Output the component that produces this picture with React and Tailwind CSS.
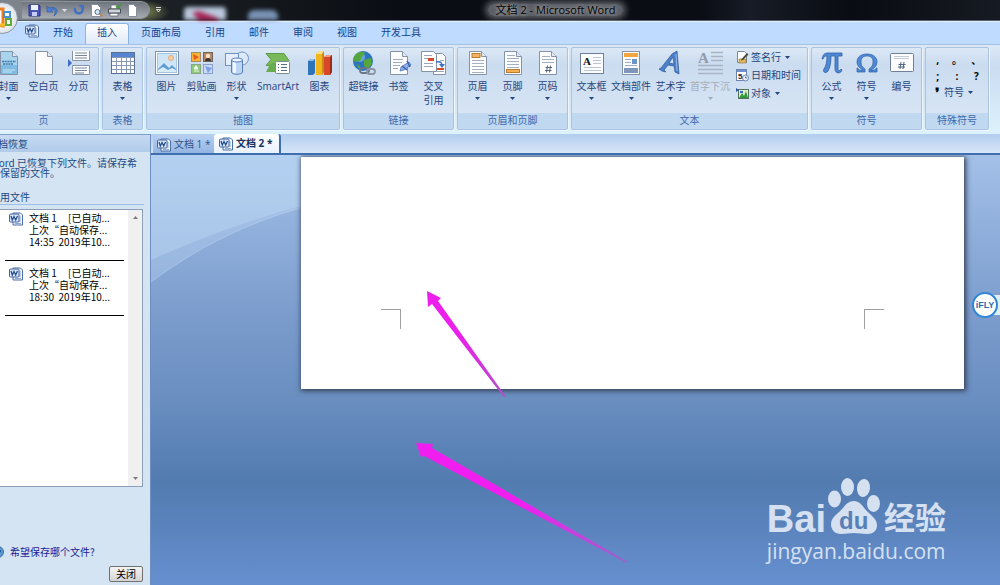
import React from 'react';
import clsx from 'clsx';

/* ---------- icons ---------- */

const Caret = ({ className }) => (
    <svg viewBox="0 0 5 3" className={clsx('w-[5px] h-[3px] shrink-0', className)}>
        <path d="M0 0h5L2.500 3z" fill="currentColor" />
    </svg>
);

const WordIcon = ({ className }) => (
    <svg viewBox="0 0 14 14" className={clsx('w-3.5 h-3.5 shrink-0', className)}>
        <path d="M4 1h7.500l2 2v10H4z" fill="#f4f8fe" stroke="#4a6ea8" />
        <path d="M6 11.500h6M11 4v6" stroke="#8fa9d0" />
        <rect x=".5" y="2" width="9.500" height="8" rx="1" fill="#dbe7f8" stroke="#44659f" />
        <path d="M2 4l1.300 4 1.700-3.500L6.700 8 8.500 4" fill="none" stroke="#24508f" strokeWidth="1.300" />
    </svg>
);

const Sheet = ({ children, fill = '#fdfdfe' }) => (
    <>
        <path d="M3.500.5h12l5 5v18h-17z" fill={fill} stroke="#8593a8" />
        <path d="M15.500.5v5h5" fill="#e3e9f2" stroke="#8593a8" />
        {children}
    </>
);

const icons = {
    cover: (
        <Sheet fill="#a9d4ee">
            <path d="M4 14h16v9H4z" fill="#7fbbe2" />
            <path d="M5 10.500h14M6 13h10" stroke="#3a75a8" strokeWidth="1.500" strokeDasharray="2 .7" />
            <path d="M6 19h12M6 21h9" stroke="#c9e5f5" />
        </Sheet>
    ),
    blank: <Sheet />,
    pageBreak: (
        <>
            <path d="M5.500 0v9.500h17V0M5.500 23.500v-9h17v9z" fill="#fff" stroke="#8593a8" />
            <path d="M8 2h12M8 4.500h12M8 7h12M8 17h12M8 19.500h12M8 22h9" stroke="#77859b" />
            <path d="M1 8l4 4-4 4z" fill="#3d6cc0" />
        </>
    ),
    table: (
        <>
            <rect x=".5" y="1.500" width="23" height="21" fill="#fff" stroke="#5b6f93" />
            <path d="M1 2h22v4H1z" fill="#5584d0" />
            <path d="M1 6.500h22M1 10.500h22M1 14.500h22M1 18.500h22M5.500 6v16M10.500 6v16M15.500 6v16M19.500 6v16" stroke="#8a99b3" />
        </>
    ),
    picture: (
        <>
            <rect x=".5" y=".5" width="23" height="23" fill="#fff" stroke="#7d93b5" />
            <rect x="2.500" y="2.500" width="19" height="19" fill="#cfe6f8" stroke="#a8c3df" />
            <circle cx="16" cy="7" r="2.500" fill="#fbd0a4" stroke="#e8a876" />
            <path d="M3 18l6-6 5 5 3-3 4 4v3H3z" fill="#5f9dce" />
            <path d="M3 19l5-3 5 3 4-2 4 2v2H3z" fill="#d8ecf8" />
        </>
    ),
    clip: (
        <>
            <rect x="1.500" y="1.500" width="9" height="9" fill="#f9b52c" stroke="#a18b6b" />
            <rect x="13.500" y="1.500" width="9" height="9" fill="#b98664" stroke="#6d635c" />
            <rect x="1.500" y="13.500" width="9" height="9" fill="#8cc979" stroke="#8aa586" />
            <rect x="13.500" y="13.500" width="9" height="9" fill="#c8dafa" stroke="#8b9fc8" />
            <path d="M3 3l6 3-5 3z" fill="#e4572c" />
            <circle cx="18" cy="5" r="2.200" fill="#fbe2c4" />
            <path d="M15 10c0-4 6-4 6 0z" fill="#3b3430" />
            <path d="M6 14.500l2 3.500H4zM4 20h5" fill="#fff" stroke="#e9f7e4" />
            <path d="M15 15l7 2-4 5z" fill="#7ba0e6" />
        </>
    ),
    shapes: (
        <>
            <circle cx="17" cy="7.500" r="6.500" fill="#dbe9fa" stroke="#6d92c5" />
            <rect x=".5" y="2.500" width="13" height="12" fill="#e5effb" stroke="#6d92c5" />
            <path d="M6.500 9v12c0 3 11 3 11 0V9z" fill="#bdd5f3" stroke="#587fb8" />
            <path d="M8 10v12h3V10z" fill="#f1f7fe" />
            <ellipse cx="12" cy="9" rx="5.500" ry="2" fill="#edf4fd" stroke="#587fb8" />
        </>
    ),
    smartArt: (
        <>
            <path d="M0 2.500h18l5 7-5 5H0l5-6z" fill="#79b958" stroke="#5b9a49" />
            <path d="M3 15l3-3h5v9H0z" fill="#69ab50" />
            <rect x="9.500" y="10.500" width="14" height="12" rx="1" fill="#fdfefe" stroke="#7a9189" />
            <path d="M12 13.500h1M15 13.500h6M12 16.500h1M15 16.500h6M12 19.500h1M15 19.500h6" stroke="#5a7080" />
        </>
    ),
    chart: (
        <>
            <path d="M0 10l3-2h4v14l-2 2H0z" fill="#2f73bb" />
            <path d="M0 10l3-2h4l-2 2z" fill="#8fc1ec" />
            <path d="M8 3l3-3h5v21l-2 3H8z" fill="#f1b51d" />
            <path d="M8 3l3-3h5l-2 3z" fill="#fbe48c" />
            <path d="M14 3l2-3v21l-2 3z" fill="#ca8a10" />
            <path d="M16 6l3-2h5v17l-2 3h-6z" fill="#d9472b" />
            <path d="M16 6l3-2h5l-2 2z" fill="#f59a80" />
            <path d="M22 6l2-2v17l-2 3z" fill="#9e2a18" />
        </>
    ),
    hyperlink: (
        <>
            <circle cx="11" cy="10" r="10" fill="#2c74c0" />
            <circle cx="8" cy="6" r="5" fill="#8cc6f0" opacity=".6" />
            <path d="M3 4c4-4 8-4 10-2l-3 4-2 4-5 1-2-3zM12 9l7-2 1 6-4 5-4-3zM4 13l4 2v4z" fill="#55a63c" />
            <rect x="8" y="17" width="9" height="5" rx="2.500" fill="none" stroke="#6c7685" strokeWidth="1.800" />
            <rect x="15" y="18" width="8" height="5" rx="2.500" fill="none" stroke="#8b95a5" strokeWidth="1.800" />
        </>
    ),
    bookmark: (
        <Sheet>
            <path d="M6 8.500h10M6 11.500h9M6 14.500h7M6 17.500h5" stroke="#a0acbf" />
            <path d="M22 11l2 3-7 5-4 1 1-4z" fill="#8fb0e8" stroke="#3f67b0" strokeWidth=".7" />
            <path d="M15 15l5 4M20 10l3 6" stroke="#3a62ad" strokeWidth="1.500" />
        </Sheet>
    ),
    crossRef: (
        <>
            <path d="M11.500 2.500h9l3 3v18h-12z" fill="#fff" stroke="#8593a8" />
            <path d="M-.5.500h12l3 3v17h-15z" fill="#fff" stroke="#8593a8" />
            <path d="M2 4.500h8M2 7.500h4M2 12.500h9M2 15.500h9M14 20.500h8M18 9.500h4" stroke="#9aa7bb" />
            <path d="M6 7h6v3H6zM15 17h7v2h-7z" fill="#d9482c" />
            <path d="M14 11c5-1 6 1 6 4" fill="none" stroke="#3c72c4" strokeWidth="1.500" />
            <path d="M17 13h6l-3 4z" fill="#3c72c4" />
        </>
    ),
    header: (
        <Sheet>
            <rect x="6" y="2.500" width="8" height="4" fill="#f2b565" stroke="#bd7b2a" />
            <path d="M6 9.500h12M6 12.500h12M6 15.500h12M6 18.500h12M6 21.500h12" stroke="#a3afc2" />
        </Sheet>
    ),
    footer: (
        <Sheet>
            <path d="M6 4.500h8M6 7.500h12M6 10.500h12M6 13.500h12M6 16.500h12" stroke="#a3afc2" />
            <rect x="5.500" y="18.500" width="13" height="3" fill="#f4b055" stroke="#bd7b2a" />
        </Sheet>
    ),
    pageNumber: (
        <Sheet>
            <path d="M6 5.500h8M6 8.500h12M6 11.500h12" stroke="#a3afc2" />
            <path d="M11.500 14.500l-1 7M14.500 14.500l-1 7M9.500 16.500h6.500M9 19.500h6.500" stroke="#53647f" />
        </Sheet>
    ),
    textBox: (
        <>
            <rect x=".5" y="2.500" width="23" height="20" fill="#fbfcfe" stroke="#6f7f98" />
            <text x="3" y="14" fontSize="11" fontWeight="bold" fontFamily="Liberation Serif, serif" fill="#111">A</text>
            <path d="M13 6.500h8M13 9.500h8M13 12.500h8M4 16.500h17M4 19.500h17" stroke="#bcc5d3" />
        </>
    ),
    quickParts: (
        <>
            <rect x="3.500" y=".5" width="17" height="23" fill="#fbfcfe" stroke="#8593a8" />
            <path d="M5 2h14v4H5z" fill="#f2a640" />
            <path d="M6 8.500h6M6 11.500h6M6 14.500h12" stroke="#9fabbf" />
            <path d="M13 8h5v5h-5z" fill="#6c94c9" />
            <path d="M5 17h14v5H5z" fill="#7d96ba" />
        </>
    ),
    wordArt: (
        <>
            <path d="M18 0l2 23-4-2-1-6-6-1-4 5 2 2-4-1-3-2 2-1L13 3zM14 6l-4 6 5 1z" fill="#4a80cd" stroke="#2c5695" strokeWidth=".7" fillRule="evenodd" />
            <path d="M17 3l1 17" stroke="#97bcf0" />
        </>
    ),
    dropCap: (
        <>
            <text x="0" y="12" fontSize="15" fontWeight="bold" fontFamily="Liberation Serif, serif" fill="#8f9bad">A</text>
            <path d="M13 1.500h12M13 5.500h12M13 9.500h12M0 14.500h25M0 18.500h25M0 22.500h25" stroke="#a9b3c3" strokeWidth="1.500" />
        </>
    ),
    equation: (
        <path d="M2 8C3 4 4 2 8 2h14v3h-4v13c0 2 2 2 3 0l1 1c-1 4-7 4-7-1V5h-4c0 7-1 11-3 15-2 3-6 1-4-2 2-3 3-7 3-13-3 0-3 1-4 3z" fill="#4f88d4" stroke="#2d5fa6" strokeWidth=".8" />
    ),
    symbol: (
        <path d="M2 21v-4h1c0 2 1 2 5 2-4-2-6-5-6-8 0-5 4-8 10-8s10 3 10 8c0 3-2 6-6 8 4 0 5 0 5-2h1v4h-8v-3c3-2 4-4 4-7 0-4-2-6-6-6s-6 2-6 6c0 3 1 5 4 7v3z" fill="#4f88d4" stroke="#2d5fa6" strokeWidth=".7" />
    ),
    number: (
        <>
            <rect x=".5" y="2.500" width="23" height="18" rx="1" fill="#fdfdfe" stroke="#6f7f98" />
            <path d="M4 5.500h15M4 7.500h15" stroke="#c3cbd8" />
            <path d="M11 11l-1 7M14 11l-1 7M8.500 13.500h7M8 16h7" stroke="#53647f" />
        </>
    ),
};

const smallIcons = {
    signature: (
        <>
            <path d="M1.500.5h7l2 2v9h-9z" fill="#fff" stroke="#7d8797" />
            <path d="M3 8h7v4H3z" fill="#e4b95a" stroke="#8a6b2b" strokeWidth=".6" />
            <path d="M11 2l1.500 1.500L7 9 5 9.500 5.500 8z" fill="#4a4a3c" />
        </>
    ),
    date: (
        <>
            <rect x=".5" y=".5" width="10" height="11" fill="#fff" stroke="#6c83ad" />
            <path d="M1 1h9v2H1z" fill="#6b93d4" />
            <text x="2" y="10" fontSize="8" fontWeight="bold" fontFamily="Liberation Sans, sans-serif" fill="#223">5</text>
            <circle cx="9.500" cy="9" r="3" fill="#e9f1fc" stroke="#6c83ad" />
            <path d="M9.500 7.500V9H11" fill="none" stroke="#44597f" strokeWidth=".8" />
        </>
    ),
    object: (
        <>
            <rect x="2.500" y="2.500" width="10" height="9" fill="#dceecb" stroke="#54715a" />
            <path d="M0 1l3 2-3 2z" fill="#2b57ad" />
            <path d="M3 11l3-5 2 3 2-5 2 7z" fill="#2e9a3c" />
            <path d="M4 4h3v2H4z" fill="#3c6cc2" />
        </>
    ),
};

const quickTools = [
    {
        label: '保存',
        art: (
            <>
                <path d="M1 1h10l1 1v10H1z" fill="#4b55b8" stroke="#2c3384" />
                <path d="M3 1h7v5H3z" fill="#eef2ff" />
                <path d="M4 8h5v4H4z" fill="#c6cdf2" />
            </>
        ),
    },
    {
        label: '撤消',
        caret: true,
        art: <path d="M1 2v6h6L5 6c3-2 6 0 3 6 6-5 3-10-5-8z" fill="#4f7fd0" stroke="#315ba6" strokeWidth=".7" />,
    },
    {
        label: '恢复',
        art: (
            <>
                <path d="M3 4a4 4 0 1 0 7-1" fill="none" stroke="#3f70c6" strokeWidth="2.400" />
                <path d="M6 1h6v5z" fill="#3f70c6" />
            </>
        ),
    },
    {
        label: '打印预览',
        art: (
            <>
                <path d="M1.500.5h6l3 3v9h-9z" fill="#fff" stroke="#868e9c" />
                <circle cx="7.500" cy="8" r="2.500" fill="#d7e9f8" stroke="#58708c" />
                <path d="M9.500 10l3 2.500" stroke="#c77c33" strokeWidth="1.500" />
            </>
        ),
    },
    {
        label: '快速打印',
        art: (
            <>
                <path d="M3 1h6v4H3zM2 9h8v3H2z" fill="#fff" stroke="#5d646e" strokeWidth=".8" />
                <path d="M.5 5h12v4H.5z" fill="#d0d4da" stroke="#444b55" />
                <path d="M8 2l2 2 3-4" fill="none" stroke="#3d9a36" strokeWidth="1.600" />
            </>
        ),
    },
    {
        label: '新建',
        art: <path d="M2.500.5h5l3 3v9h-8z" fill="#fff" stroke="#868e9c" />,
    },
];

/* ---------- data ---------- */

const tabs = ['开始', '插入', '页面布局', '引用', '邮件', '审阅', '视图', '开发工具'];

const groups = [
    {
        title: '页',
        items: [
            { label: '封面', icon: 'cover', caret: true },
            { label: '空白页', icon: 'blank' },
            { label: '分页', icon: 'pageBreak' },
        ],
    },
    { title: '表格', items: [{ label: '表格', icon: 'table', caret: true }] },
    {
        title: '插图',
        items: [
            { label: '图片', icon: 'picture' },
            { label: '剪贴画', icon: 'clip' },
            { label: '形状', icon: 'shapes', caret: true },
            { label: 'SmartArt', icon: 'smartArt', width: 'w-12' },
            { label: '图表', icon: 'chart' },
        ],
    },
    {
        title: '链接',
        items: [
            { label: '超链接', icon: 'hyperlink' },
            { label: '书签', icon: 'bookmark' },
            { label: '交叉引用', icon: 'crossRef', wrap: true },
        ],
    },
    {
        title: '页眉和页脚',
        items: [
            { label: '页眉', icon: 'header', caret: true },
            { label: '页脚', icon: 'footer', caret: true },
            { label: '页码', icon: 'pageNumber', caret: true },
        ],
    },
    {
        title: '文本',
        items: [
            { label: '文本框', icon: 'textBox', caret: true },
            { label: '文档部件', icon: 'quickParts', caret: true, width: 'w-11' },
            { label: '艺术字', icon: 'wordArt', caret: true },
            { label: '首字下沉', icon: 'dropCap', caret: true, width: 'w-11', disabled: true },
        ],
        small: [
            { label: '签名行', icon: 'signature', caret: true },
            { label: '日期和时间', icon: 'date' },
            { label: '对象', icon: 'object', caret: true },
        ],
    },
    {
        title: '符号',
        items: [
            { label: '公式', icon: 'equation', caret: true },
            { label: '符号', icon: 'symbol', caret: true },
            { label: '编号', icon: 'number' },
        ],
    },
];

const recovered = [
    { name: '文档 1', time: '14:35' },
    { name: '文档 1', time: '18:30' },
];

/* ---------- ribbon ---------- */

function RibbonButton({ item }) {
    return (
        <button
            disabled={item.disabled}
            className={clsx(
                'flex flex-col items-center shrink-0 pt-[3px]',
                item.width || 'w-[35px]',
                item.disabled ? 'text-[#a3abb8]' : 'text-[#1f4680]'
            )}
        >
            <svg viewBox="0 0 24 24" className="w-6 h-6 overflow-visible">{icons[item.icon]}</svg>
            <span className={clsx('mt-1 leading-[14px]', item.wrap ? 'w-5' : 'whitespace-nowrap')}>{item.label}</span>
            {item.caret && <Caret className="mt-1" />}
        </button>
    );
}

function Group({ title, children }) {
    return (
        <section className="flex flex-col shrink-0 rounded-[2px] border border-[#a9c3e0] overflow-hidden bg-linear-to-b from-[#dce8f5] via-[#cbdcf0] via-20% to-[#dbe8f6] shadow-[1px_1px_0_#eef5fc]">
            <div className="flex flex-1 px-[2px]">{children}</div>
            <h2 className="h-4 leading-[14px] text-center bg-[#c1d8f1] text-[#3e6aaa]">{title}</h2>
        </section>
    );
}

function Ribbon() {
    return (
        <div className="flex gap-[3px] h-[90px] pt-[2px] pb-1 -ml-3 border-t border-[#a5c2e6] bg-linear-to-b from-[#dce8f6] via-[#cbdcf1] via-25% to-[#dcf2fb]">
            {groups.map((group) => (
                <Group key={group.title} title={group.title}>
                    {group.items.map((item) => <RibbonButton key={item.label} item={item} />)}
                    {group.small && (
                        <div className="flex flex-col gap-1 pt-[2px] pl-1 w-[73px]">
                            {group.small.map((item) => (
                                <button key={item.label} className="flex items-center gap-[2px] text-[#1f4680] leading-[14px] whitespace-nowrap">
                                    <svg viewBox="0 0 13 13" className="w-[13px] h-[13px] shrink-0">{smallIcons[item.icon]}</svg>
                                    {item.label}
                                    {item.caret && <Caret className="ml-[2px]" />}
                                </button>
                            ))}
                        </div>
                    )}
                </Group>
            ))}
            <Group title="特殊符号">
                <div className="grid grid-cols-3 w-[58px] pt-1 pb-3 text-black font-bold">
                    {[',', '。', '、', ';', ':', '?'].map((mark) => (
                        <button key={mark} className="leading-4">{mark}</button>
                    ))}
                    <button className="col-span-3 flex items-center gap-1 pl-1.5">
                        <span className="w-1.5 text-sm leading-4">❜</span>
                        <span className="font-normal text-[#1f4680]">符号</span>
                        <Caret className="text-[#1f4680]" />
                    </button>
                </div>
            </Group>
        </div>
    );
}

/* ---------- window header ---------- */

function TitleBar() {
    return (
        <header className="flex items-center h-[21px] pl-[22px] border-b border-[#59616e] bg-[#090c12] bg-[radial-gradient(ellipse_30px_12px_at_140px_12px,#8b9359,transparent),linear-gradient(90deg,#7d838b_3%,#1d2226_15%,#0a0d13_40%,#0a0d14_70%,#171c26_75%,#090c12_85%,#161a22)]">
            <div className="flex items-center gap-[5px] h-[18px] w-[128px] pl-1.5 rounded-r-full border border-l-0 border-[#8d939c] bg-linear-to-b from-[#6f757d] to-[#a7abb2]">
                {quickTools.map((tool) => (
                    <button key={tool.label} aria-label={tool.label} className="flex items-center gap-[3px]">
                        <svg viewBox="0 0 13 13" className="w-[13px] h-[13px]">{tool.art}</svg>
                        {tool.caret && <Caret className="text-[#dfe4ec]" />}
                    </button>
                ))}
            </div>
            <button aria-label="自定义快速访问工具栏" className="ml-1.5 text-white">
                <svg viewBox="0 0 5 6" className="w-[5px] h-1.5"><path d="M0 .5h5M.5 2.500h4L2.500 5z" fill="none" stroke="currentColor" strokeWidth=".8" /></svg>
            </button>
            <svg viewBox="0 0 110 20" className="w-[110px] h-5 ml-4 blur-[2px]">
                <rect x="7" y="7" width="42" height="18" rx="4" fill="#b9c8dc" />
                <path d="M15 13l7-2 19 7v2H22z" fill="#a92657" />
                <rect x="71" y="10" width="30" height="14" rx="6" fill="#7992b4" />
            </svg>
            <div className="flex-1 flex justify-center pr-[52px] -ml-[124px]">
                <h1 className="px-2 text-[11px] leading-3 rounded-full text-black bg-[#7d8188]/70 shadow-[0_0_6px_3px_#7d8188b3] [text-shadow:0_0_4px_#ddd]">文档 2 - Microsoft Word</h1>
            </div>
        </header>
    );
}

function TabRow() {
    return (
        <nav className="flex items-end h-[23px] pl-[25px] border-t border-[#e4effc] bg-[#bfdbff]">
            <WordIcon className="mb-1.5 mr-[2px]" />
            {tabs.map((tab) => (
                <button
                    key={tab}
                    className={clsx(
                        'h-[21px] px-[11px] pb-1 border border-b-0 rounded-t-[3px] leading-4 text-[#15428b]',
                        tab === '插入' ? 'border-[#8fb3e0] bg-linear-to-b from-white to-[#dfeaf7]' : 'border-transparent'
                    )}
                >
                    {tab}
                </button>
            ))}
        </nav>
    );
}

/* ---------- recovery pane ---------- */

function RecoveryPane() {
    return (
        <aside className="flex flex-col shrink-0 w-[151px] overflow-hidden border-r border-[#6c8fc0] bg-[#d5e4f2] font-['Noto_Sans_CJK_SC',sans-serif] text-[#1d4a84]">
            <h2 className="h-[18px] leading-[18px] -ml-3 whitespace-nowrap border-t border-[#7f9fc8] bg-linear-to-b from-[#c6daf1] to-[#b0cbea]">文档恢复</h2>
            <p className="-ml-2.5 pt-1.5 leading-[10px] whitespace-nowrap">
                Word 已恢复下列文件。请保存希<br />望保留的文件。
            </p>
            <h3 className="mt-3 mr-1.5 leading-[14px] border-b border-[#9dbfe4]"><span className="-ml-2.5">可用文件</span></h3>
            <div className="flex mt-1 mr-[7px] h-[278px] border border-[#8c9fb8] border-l-0 bg-white text-black">
                <ul className="flex-1 -mt-1 pl-[5px] pr-1">
                    {recovered.map((file) => (
                        <li key={file.time} className="flex gap-1.5 h-[55px] pt-1.5 pl-1 border-b border-black leading-3 whitespace-nowrap">
                            <WordIcon />
                            <a href="#recovered">
                                {file.name}&nbsp;&nbsp;&nbsp;&nbsp; [已自动...<br />上次“自动保存...<br />{file.time}&nbsp; 2019年10...
                            </a>
                        </li>
                    ))}
                </ul>
                <div className="flex flex-col justify-between items-center w-3.5 py-1.5 bg-[#f0f0f0] text-[#7b7b7b]">
                    <button aria-label="向上滚动"><Caret className="rotate-180" /></button>
                    <button aria-label="向下滚动"><Caret /></button>
                </div>
            </div>
            <a href="#help" className="flex items-center gap-1.5 -ml-2 mt-auto leading-4 text-[#1a1a96]">
                <svg viewBox="0 0 12 12" className="w-3 h-3">
                    <circle cx="6" cy="6" r="5.500" fill="#5b9bd0" stroke="#3b6ea5" />
                    <path d="M7 3l2 2-2 4z" fill="#163f86" />
                </svg>
                希望保存哪个文件?
            </a>
            <button className="self-end w-[34px] h-4 mt-1.5 mr-[7px] mb-[3px] leading-[14px] rounded-[2px] border border-[#707070] bg-linear-to-b from-[#f4f4f4] to-[#d4d4d4] text-black">关闭</button>
        </aside>
    );
}

/* ---------- document ---------- */

function DocumentTabs() {
    return (
        <div className="flex items-end h-[21px] pl-[2px] border-b-2 border-[#3f6fae] bg-linear-to-b from-[#b2cdee] to-[#d7e6f8]">
            <button className="flex items-center gap-[3px] h-[17px] w-[61px] pl-1 bg-linear-to-b from-[#b5cef0] to-[#94b5e2] text-[#2d5489] whitespace-nowrap">
                <WordIcon />文档 1 *
            </button>
            <button className="flex items-center gap-[3px] h-[19px] w-[67px] pl-[5px] rounded-t-[3px] border-r-2 border-[#3f6fae] bg-linear-to-b from-white to-[#e8f1fc] font-bold text-[#15345f] whitespace-nowrap">
                <WordIcon />文档 2 *
            </button>
        </div>
    );
}

function Arrows() {
    return (
        <svg viewBox="0 0 850 430" className="absolute left-0 top-0 w-[850px] h-[430px] pointer-events-none">
            <defs>
                <linearGradient id="short" x1="276" y1="136" x2="355" y2="243" gradientUnits="userSpaceOnUse">
                    <stop offset=".4" stopColor="#ec1fec" />
                    <stop offset="1" stopColor="#b04fc8" />
                </linearGradient>
                <linearGradient id="long" x1="265" y1="289" x2="477" y2="408" gradientUnits="userSpaceOnUse">
                    <stop offset=".5" stopColor="#f01ff0" />
                    <stop offset="1" stopColor="#a060cc" />
                </linearGradient>
            </defs>
            <path d="M276 136l14 7-3 3 66 93 2 3-3-1-71-92-4 3z" fill="url(#short)" />
            <path d="M265 288l17 1-1 4 196 114-1 1-203-107-3 1z" fill="url(#long)" />
        </svg>
    );
}

function Watermark() {
    return (
        <div className="absolute right-[54px] bottom-[22px] text-[#d5e1f1]">
            <div className="flex items-end h-14 gap-[2px] font-bold font-['Liberation_Sans','Noto_Sans_CJK_SC',sans-serif]">
                <span className="text-[38px] leading-8">Bai</span>
                <svg viewBox="0 0 52 58" className="w-[52px] h-[58px]" fill="currentColor">
                    <ellipse cx="6.500" cy="22" rx="6.500" ry="8.500" />
                    <ellipse cx="19.500" cy="10" rx="6.500" ry="9" />
                    <ellipse cx="35.500" cy="11" rx="6.500" ry="9" transform="rotate(8 35.500 11)" />
                    <ellipse cx="45.500" cy="26.500" rx="6.500" ry="8.500" />
                    <path d="M26 24c5 0 8 4 11 8s12 9 12 16c0 6-4 9-10 9-5 0-8-1-13-1s-8 1-13 1C7 57 3 53 3 47c0-7 8-11 12-16 3-4 6-7 11-7z" />
                    <text x="11" y="52" fontSize="24" fill="#5880b6">du</text>
                </svg>
                <span className="ml-[2px] text-[31px] leading-8">经验</span>
            </div>
            <div className="mt-1 text-[21px] leading-6 font-['Open_Sans',sans-serif]">jingyan.baidu.com</div>
        </div>
    );
}

function Canvas() {
    return (
        <main className="relative flex-1 pt-[2px] overflow-hidden bg-[linear-gradient(#a3c0e8,#7a9bcc_38%,#6b8fc1_56%,#527bb0_76%,#668fcf)]">
            <svg viewBox="0 0 850 430" preserveAspectRatio="none" className="absolute inset-0 w-full h-full">
                <path d="M0 105Q70 73 150 51V0H0z" fill="#c4dffa" opacity=".35" />
                <path d="M0 127Q70 75 150 53V0H0z" fill="#c4dffa" opacity=".3" />
                <path d="M0 127Q70 75 150 53" fill="none" stroke="#c4dcf6" opacity=".4" />
            </svg>
            <div className="relative flex justify-between items-end h-[232px] ml-[150px] mr-9 px-20 pb-[60px] bg-white shadow-[1px_1px_5px_1px_#333f55]">
                <span className="w-5 h-5 border-t border-r border-[#a0a0a0]" />
                <span className="w-5 h-5 border-t border-l border-[#a0a0a0]" />
            </div>
            <Arrows />
            <div className="absolute right-0 top-[137px] flex items-center h-[26px] w-7">
                <span className="absolute right-0 w-4 h-5 bg-[#dff0f8]" />
                <button className="relative w-[26px] h-[26px] rounded-full border-2 border-[#2f86d8] bg-white text-[9px] leading-none font-bold font-['Liberation_Sans',sans-serif] text-[#2a6cb0]">iFLY</button>
            </div>
            <Watermark />
        </main>
    );
}

export default function App() {
    return (
        <div className="relative flex flex-col h-screen overflow-hidden bg-[#bfdbff] text-[10px] font-['Open_Sans','Noto_Sans_CJK_SC',sans-serif]">
            <TitleBar />
            <TabRow />
            <Ribbon />
            <button aria-label="Office 按钮" className="absolute -left-3.5 top-[2px] w-8 h-8 rounded-full border border-[#8d96a3] bg-[radial-gradient(circle,#ffffff_30%,#c3cad4)]">
                <svg viewBox="0 0 30 30" className="w-full h-full" fill="none">
                    <path d="M10 6h6v17l-6-1z" stroke="#ef7d1c" strokeWidth="3" />
                    <rect x="17" y="9" width="6" height="5" stroke="#4b8fd3" strokeWidth="2" />
                    <rect x="19" y="16" width="5" height="6" stroke="#62ab3c" strokeWidth="2" />
                    <path d="M12 22h6" stroke="#f3bd2a" strokeWidth="3" />
                </svg>
            </button>
            <div className="flex flex-1 min-h-0">
                <RecoveryPane />
                <div className="flex flex-col flex-1 min-w-0">
                    <DocumentTabs />
                    <Canvas />
                </div>
            </div>
        </div>
    );
}
